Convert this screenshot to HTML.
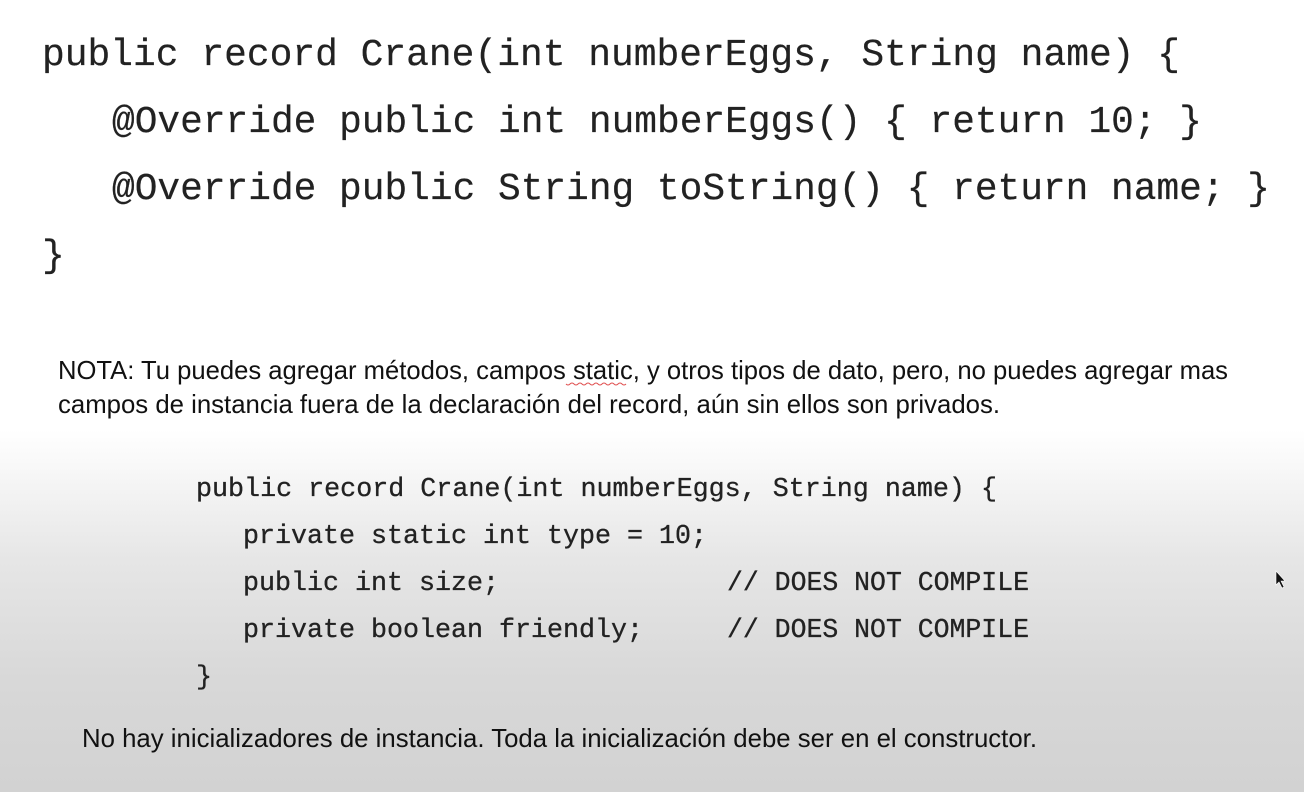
<!DOCTYPE html>
<html><head><meta charset="utf-8"><style>
html,body{margin:0;padding:0;width:1304px;height:792px;overflow:hidden}
body{background:linear-gradient(to bottom,#fff 0px,#fff 430px,#e6e6e6 560px,#d8d8d8 680px,#d2d2d2 792px)}
svg{position:absolute;left:0;top:0}
.m{font-family:"Liberation Mono",monospace;fill:#222;stroke:#222;stroke-width:0.2}
.s{font-family:"Liberation Sans",sans-serif;fill:#111}
</style></head><body>
<svg width="1304" height="792" xmlns="http://www.w3.org/2000/svg">
<g class="m" font-size="38" xml:space="preserve">
<text x="42" y="65" textLength="1138" lengthAdjust="spacingAndGlyphs">public record Crane(int numberEggs, String name) {</text>
<text x="112" y="132" textLength="1090" lengthAdjust="spacingAndGlyphs">@Override public int numberEggs() { return 10; }</text>
<text x="112" y="199" textLength="1158" lengthAdjust="spacingAndGlyphs">@Override public String toString() { return name; }</text>
<text x="42" y="266">}</text>
</g>
<g class="s" font-size="26">
<text x="58" y="379" textLength="1170" lengthAdjust="spacingAndGlyphs">NOTA: Tu puedes agregar métodos, campos static, y otros tipos de dato, pero, no puedes agregar mas</text>
<text x="58" y="413" textLength="942" lengthAdjust="spacingAndGlyphs">campos de instancia fuera de la declaración del record, aún sin ellos son privados.</text>
</g>
<path d="M566 384 q2 2 4 0 t4 0 t4 0 t4 0 t4 0 t4 0 t4 0 t4 0 t4 0 t4 0 t4 0 t4 0 t4 0 t4 0 t4 0" stroke="#e05050" stroke-width="1" fill="none"/>
<g class="m" font-size="26.7" style="stroke-width:0.3">
<text x="196" y="496" textLength="801" lengthAdjust="spacingAndGlyphs">public record Crane(int numberEggs, String name) {</text>
<text x="243" y="543" textLength="464" lengthAdjust="spacingAndGlyphs">private static int type = 10;</text>
<text x="243" y="590" textLength="256" lengthAdjust="spacingAndGlyphs">public int size;</text>
<text x="727" y="590" textLength="302" lengthAdjust="spacingAndGlyphs">// DOES NOT COMPILE</text>
<text x="243" y="637" textLength="400" lengthAdjust="spacingAndGlyphs">private boolean friendly;</text>
<text x="727" y="637" textLength="302" lengthAdjust="spacingAndGlyphs">// DOES NOT COMPILE</text>
<text x="196" y="684">}</text>
</g>
<text class="s" font-size="26" x="82" y="747" textLength="955" lengthAdjust="spacingAndGlyphs">No hay inicializadores de instancia. Toda la inicialización debe ser en el constructor.</text>
<path d="M1276 571 l0 14 l3 -3 l3 6 l2 -1 l-3 -6 l4 0 z" fill="#111" stroke="#fff" stroke-width="0.6"/>
</svg>
</body></html>
